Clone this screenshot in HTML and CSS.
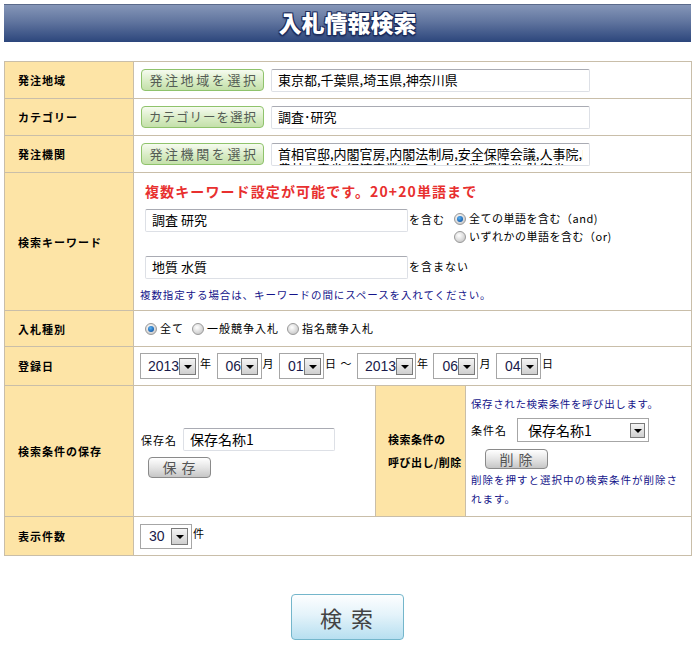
FILE: index.html
```html
<!DOCTYPE html>
<html lang="ja">
<head>
<meta charset="utf-8">
<title>入札情報検索</title>
<link rel="stylesheet" href="styles.css">
</head>
<body>
<div class="page">
  <h1 class="head">入札情報検索</h1>
  <table class="form">
    <colgroup><col class="c1"><col class="c2"><col class="c3"><col class="c4"></colgroup>
    <tr class="r-sel">
      <th>発注地域</th>
      <td colspan="3"><div class="line"><span class="gbtn">発注地域を選択</span><div class="inp wide">東京都,千葉県,埼玉県,神奈川県</div></div></td>
    </tr>
    <tr class="r-sel">
      <th>カテゴリー</th>
      <td colspan="3"><div class="line"><span class="gbtn g8">カテゴリーを選択</span><div class="inp wide">調査･研究</div></div></td>
    </tr>
    <tr class="r-sel">
      <th>発注機関</th>
      <td colspan="3"><div class="line"><span class="gbtn">発注機関を選択</span><div class="inp wide multi"><span class="l1">首相官邸,内閣官房,内閣法制局,安全保障会議,人事院,内閣府</span><span class="l2">農林水産省,経済産業省,国土交通省,環境省,防衛省</span></div></div></td>
    </tr>
    <tr class="r-kw">
      <th>検索キーワード</th>
      <td colspan="3" class="top">
        <div class="kw">
          <p class="red">複数キーワード設定が可能です。20+20単語まで</p>
          <div class="kwrow">
            <div class="inp kwin">調査 研究</div>
            <span class="sm">を含む</span>
            <div class="radios">
              <label class="rad"><span class="rb on"></span>全ての単語を含む（and)</label>
              <label class="rad"><span class="rb"></span>いずれかの単語を含む（or)</label>
            </div>
          </div>
          <div class="kwrow second">
            <div class="inp kwin">地質 水質</div>
            <span class="sm">を含まない</span>
          </div>
          <p class="blue">複数指定する場合は、キーワードの間にスペースを入れてください。</p>
        </div>
      </td>
    </tr>
    <tr class="r-type">
      <th>入札種別</th>
      <td colspan="3">
        <div class="typerow">
          <label class="rad"><span class="rb on"></span>全て</label>
          <label class="rad"><span class="rb"></span>一般競争入札</label>
          <label class="rad"><span class="rb"></span>指名競争入札</label>
        </div>
      </td>
    </tr>
    <tr class="r-date">
      <th>登録日</th>
      <td colspan="3">
        <div class="daterow">
          <span class="sel y"><span class="v">2013</span><span class="arr"></span></span><span class="u">年</span>
          <span class="sel m"><span class="v">06</span><span class="arr"></span></span><span class="u">月</span>
          <span class="sel m"><span class="v">01</span><span class="arr"></span></span><span class="u tilde">日 ～</span>
          <span class="sel y"><span class="v">2013</span><span class="arr"></span></span><span class="u">年</span>
          <span class="sel m"><span class="v">06</span><span class="arr"></span></span><span class="u">月</span>
          <span class="sel m"><span class="v">04</span><span class="arr"></span></span><span class="u">日</span>
        </div>
      </td>
    </tr>
    <tr class="r-save">
      <th>検索条件の保存</th>
      <td>
        <div class="save">
          <div class="saverow"><span class="sm">保存名</span><div class="inp savein">保存名称1</div></div>
          <span class="gybtn">保存</span>
        </div>
      </td>
      <th class="th2">検索条件の<br>呼び出し/削除</th>
      <td>
        <div class="call">
          <p class="blue">保存された検索条件を呼び出します。</p>
          <div class="callrow"><span class="sm">条件名</span><span class="sel cond"><span class="v">保存名称1</span><span class="arr"></span></span></div>
          <span class="gybtn del">削除</span>
          <p class="blue two">削除を押すと選択中の検索条件が削除されます。</p>
        </div>
      </td>
    </tr>
    <tr class="r-num">
      <th>表示件数</th>
      <td colspan="3">
        <div class="numrow"><span class="sel n"><span class="v">30</span><span class="arr"></span></span><span class="u">件</span></div>
      </td>
    </tr>
  </table>
  <div class="submit"><span class="sbtn">検 索</span></div>
</div>
</body>
</html>
```
FILE: styles.css
```css
* { box-sizing: border-box; }
html, body { margin: 0; padding: 0; background: #fff; }
body {
  font-family: "Noto Sans CJK JP", "Noto Sans", sans-serif;
  color: #000;
}
.page { padding: 4px 6px 0 4px; }
.head {
  margin: 0;
  height: 38px;
  background: linear-gradient(#8596b8 0%, #61759f 45%, #2c467c 100%);
  border-top: 1px solid #5a6a8a;
  color: #fff;
  font-size: 23px;
  font-weight: 900;
  line-height: 35px;
  text-align: center;
  text-shadow: 1px 1px 0 #1c2c5c, -1px -1px 0 #1c2c5c, 1px -1px 0 #1c2c5c, -1px 1px 0 #1c2c5c, 0 2px 2px #1c2c5c;
}
.form {
  margin-top: 19px;
  width: 688px;
  border-collapse: collapse;
  table-layout: fixed;
}
.c1 { width: 129px; }
.c2 { width: 242px; }
.c3 { width: 90px; }
.c4 { width: auto; }
.form th, .form td {
  border: 1px solid #c9bea9;
  padding: 0;
  vertical-align: middle;
}
.form td.top { vertical-align: top; }
.form th {
  background: #fde4a6;
  text-align: left;
  padding-left: 13px;
  font-size: 11px;
  font-weight: 700;
  letter-spacing: 1px;
  line-height: 14px;
}
.form th.th2 { padding-left: 12px; line-height: 23px; letter-spacing: 0.5px; }
.r-sel { height: 37px; }
.r-kw { height: 138px; }
.r-type { height: 36px; }
.r-date { height: 39px; }
.r-save { height: 131px; }
.r-num { height: 39px; }
.line { display: flex; align-items: center; padding-left: 7px; }
.gbtn {
  display: inline-block;
  width: 123px;
  height: 22px;
  border: 1px solid #8fc36c;
  border-radius: 4px;
  background: linear-gradient(#f6fbf0, #d6ebc2 60%, #c4e0aa);
  color: #545c54;
  font-size: 13px;
  line-height: 20px;
  letter-spacing: 2.6px;
  padding-left: 3px;
  text-align: center;
  white-space: nowrap;
  overflow: hidden;
}
.gbtn.g8 { letter-spacing: 1px; padding-left: 1px; font-size: 12.5px; }
.inp {
  border: 1px solid #dde0e6;
  border-top-color: #a9abb3;
  border-radius: 2px;
  background: #fff;
  font-size: 13px;
  line-height: 20px;
  padding: 0 6px;
  white-space: nowrap;
  overflow: hidden;
}
.inp.wide { width: 319px; height: 23px; margin-left: 7px; }
.inp.multi { display: flex; flex-direction: column; line-height: 15px; padding-top: 2px; }
.inp.multi span { display: block; height: 15px; flex: none; overflow: hidden; }
.kw { padding: 8px 0 0 11px; }
.red {
  margin: 0 0 8px 0;
  color: #e8302f;
  font-size: 14px;
  font-weight: 700;
  line-height: 20px;
  letter-spacing: 1.1px;
}
.kwrow { display: flex; align-items: flex-start; }
.inp.kwin { width: 263px; height: 23px; }
.sm { font-size: 11px; letter-spacing: 1px; line-height: 14px; margin-left: 1px; padding-top: 3px; }
.radios { display: flex; flex-direction: column; margin-left: 9px; gap: 3px; padding-top: 2px; }
.rad { display: flex; align-items: center; font-size: 11px; letter-spacing: 1px; line-height: 15px; white-space: nowrap; }
.radios .rad { letter-spacing: 0.5px; }
.rb {
  width: 12px; height: 12px; border-radius: 50%;
  border: 1px solid #9a9a9a;
  background: radial-gradient(circle at 40% 35%, #ffffff, #d0d0d0 70%, #b8b8b8);
  margin-right: 3px;
  position: relative;
  flex: none;
}
.rb.on::after {
  content: ""; position: absolute; left: 2px; top: 2px; width: 6px; height: 6px; border-radius: 50%;
  background: radial-gradient(circle at 40% 35%, #5ab0f0, #1058a8 80%);
}
.kwrow.second { margin-top: 12px; }
.blue { margin: 0; color: #14148a; font-size: 10.5px; letter-spacing: 0.6px; line-height: 19px; }
.kw .blue { margin-top: 6px; margin-left: -5px; letter-spacing: 0.9px; }
.typerow { display: flex; align-items: center; padding-left: 11px; gap: 8px; }
.typerow .rb { margin-right: 3px; }
.daterow { display: flex; align-items: center; padding-left: 6px; }
.sel {
  display: inline-flex; align-items: center; justify-content: space-between;
  height: 26px; border: 1px solid #a6a6a6; background: #fff;
  padding: 0 3px 0 8px;
  font-family: "Liberation Sans", Arial, sans-serif; font-size: 14px; color: #1a1a4a;
}
.sel.y { width: 59px; padding-left: 7px; }
.sel.m { width: 45px; padding-left: 8px; }
.arr {
  width: 17px; height: 17px; border: 1px solid #7a7a7a;
  background: linear-gradient(#f4f4f4, #cfcfcf);
  position: relative; flex: none;
}
.arr::after {
  content: ""; position: absolute; left: 4px; top: 6px;
  border-left: 4px solid transparent; border-right: 4px solid transparent; border-top: 4px solid #000;
}
.u { font-size: 11px; margin: 0 5px 6px 1px; letter-spacing: 0.5px; }
.u.tilde { margin-right: 5px; word-spacing: 1px; }
.save { padding-left: 6px; }
.saverow { display: flex; align-items: center; margin-top: 4px; }
.saverow .sm { padding-top: 0; margin-right: 6px; }
.inp.savein { width: 152px; height: 23px; font-size: 14px; }
.gybtn {
  display: inline-block; width: 63px; height: 21px; margin: 6px 0 0 8px;
  border: 1px solid #8a8a8a; border-radius: 4px;
  background: linear-gradient(#ffffff, #e2e2e2 55%, #c6c6c6);
  color: #555; font-size: 14px; line-height: 19px; letter-spacing: 5px; text-align: center; padding-left: 4px;
}
.call { padding-left: 5px; }
.callrow { display: flex; align-items: center; margin-top: 5px; }
.callrow .sm { padding-top: 0; margin-right: 10px; margin-left: 0; }
.sel.cond { width: 132px; height: 24px; font-family: "Noto Sans CJK JP", sans-serif; font-size: 14px; padding-left: 10px; color: #000; }
.sel.cond .arr { width: 15px; height: 15px; }
.sel.cond .arr::after { left: 3px; top: 5px; }
.gybtn.del { margin: 7px 0 0 14px; height: 20px; line-height: 18px; }
.blue.two { margin-top: 0; letter-spacing: 1px; padding-right: 4px; }
.numrow { display: flex; align-items: center; padding-left: 6px; }
.sel.n { width: 52px; height: 25px; }
.numrow .u { margin: 0 0 6px 1px; }
.submit { display: flex; justify-content: center; padding-top: 38px; }
.sbtn {
  display: inline-block; width: 113px; height: 46px; margin-left: 0;
  border: 1px solid #74b6cb; border-radius: 4px;
  background: linear-gradient(#fdfeff, #e4f3fa 45%, #b7dff0);
  color: #444; font-size: 22px; line-height: 44px; text-align: center; letter-spacing: 2px;
}
```
